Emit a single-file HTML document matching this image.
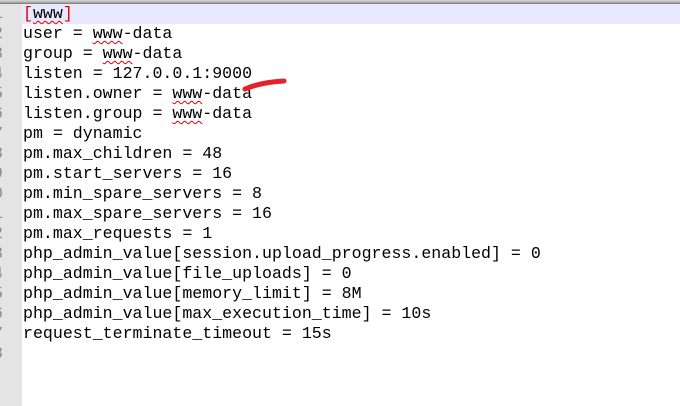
<!DOCTYPE html><html><head><style>
body{margin:0;width:680px;height:406px;overflow:hidden;background:#fff;position:relative;font-family:"Liberation Mono",monospace}
.top{position:absolute;left:0;top:0;width:680px;height:4px;background:linear-gradient(#d8d8d8,#a0a0a0 75%,#606060)}
.g{position:absolute;left:0;top:4px;width:22px;height:402px;background:#e4e4e4}
.hl{position:absolute;left:22px;top:4px;width:658px;height:20px;background:#e8e8ff}
.num{position:absolute;left:-7px;top:4px;font-size:16.6px;line-height:20px;color:#8a8a8a}
pre{position:absolute;left:23px;top:4px;margin:0;font-size:16.6px;line-height:20px;color:#000;font-family:"Liberation Mono",monospace}
.r{color:#e00000}
.u{text-decoration:underline wavy #e00000;text-decoration-thickness:1px;text-underline-offset:2px}
</style></head><body>
<div class="top"></div><div class="g"></div><div class="hl"></div>
<div class="num">1<br>2<br>3<br>4<br>5<br>6<br>7<br>8<br>9<br>0<br>1<br>2<br>3<br>4<br>5<br>6<br>7<br>8</div>
<pre><span class="r">[</span><span class="u">www</span><span class="r">]</span>
user = <span class="u">www</span>-data
group = <span class="u">www</span>-data
listen = 127.0.0.1:9000
listen.owner = <span class="u">www</span>-data
listen.group = <span class="u">www</span>-data
pm = dynamic
pm.max_children = 48
pm.start_servers = 16
pm.min_spare_servers = 8
pm.max_spare_servers = 16
pm.max_requests = 1
php_admin_value[session.upload_progress.enabled] = 0
php_admin_value[file_uploads] = 0
php_admin_value[memory_limit] = 8M
php_admin_value[max_execution_time] = 10s
request_terminate_timeout = 15s</pre>
<svg style="position:absolute;left:0;top:0" width="680" height="406"><path d="M245 89 Q262 82 284 81" stroke="#e8202a" stroke-width="5" fill="none" stroke-linecap="round"/></svg>
</body></html>
